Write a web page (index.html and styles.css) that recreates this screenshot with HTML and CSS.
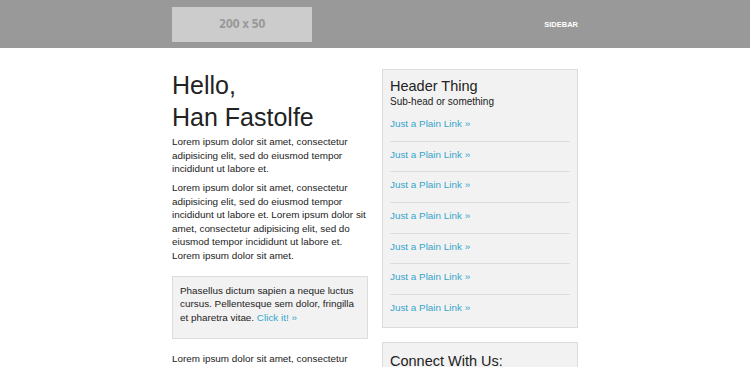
FILE: index.html
```html
<!DOCTYPE html>
<html lang="en">

<head>
    <meta charset="UTF-8">
    <meta name="viewport" content="width=device-width, initial-scale=1.0">
    <title>Hello, Han Fastolfe</title>
    <link rel="stylesheet" href="styles.css">
</head>

<body>

    <!-- Top bar -->
    <header class="topbar">
        <div class="wrap topbar-inner">
            <a class="logo" href="#">200 x 50</a>
            <a class="topbar-link" href="#">SIDEBAR</a>
        </div>
    </header>

    <!-- Main -->
    <div class="wrap main">
        <div class="content">
            <h1>Hello,<br>Han Fastolfe</h1>
            <p>Lorem ipsum dolor sit amet, consectetur adipisicing elit, sed do eiusmod tempor incididunt ut labore et.</p>
            <p>Lorem ipsum dolor sit amet, consectetur adipisicing elit, sed do eiusmod tempor incididunt ut labore et. Lorem ipsum dolor sit amet, consectetur adipisicing elit, sed do eiusmod tempor incididunt ut labore et. Lorem ipsum dolor sit amet.</p>

            <div class="callout">
                <p>Phasellus dictum sapien a neque luctus cursus. Pellentesque sem dolor, fringilla et pharetra vitae. <a href="#">Click it! &raquo;</a></p>
            </div>

            <p>Lorem ipsum dolor sit amet, consectetur adipisicing elit, sed do eiusmod tempor incididunt ut labore et.</p>
        </div>

        <aside class="sidebar">
            <div class="panel">
                <h3>Header Thing</h3>
                <h5>Sub-head or something</h5>
                <ul class="link-list">
                    <li><a href="#">Just a Plain Link &raquo;</a></li>
                    <li><a href="#">Just a Plain Link &raquo;</a></li>
                    <li><a href="#">Just a Plain Link &raquo;</a></li>
                    <li><a href="#">Just a Plain Link &raquo;</a></li>
                    <li><a href="#">Just a Plain Link &raquo;</a></li>
                    <li><a href="#">Just a Plain Link &raquo;</a></li>
                    <li><a href="#">Just a Plain Link &raquo;</a></li>
                </ul>
            </div>

            <div class="panel">
                <h3 class="big">Connect With Us:</h3>
            </div>
        </aside>
    </div>

</body>

</html>
```

FILE: styles.css
```css
body {
    font-family: 'Liberation Sans', Arial, sans-serif;
    font-size: 9.9px;
    line-height: 13.5px;
    color: #222;
    background: #fff;
    margin: 0;
    padding: 0;
}

a {
    color: #35a5cc;
    text-decoration: none;
}

.wrap {
    width: 406px;
    margin: 0 auto;
}

/* Top bar */
.topbar {
    background: #999;
    height: 48px;
}

.topbar-inner {
    display: flex;
    justify-content: space-between;
    align-items: flex-start;
    padding-top: 7px;
}

.logo {
    display: flex;
    align-items: center;
    justify-content: center;
    width: 140px;
    height: 35px;
    background: #ccc;
    color: #999;
    font-family: 'DejaVu Sans Condensed', 'DejaVu Sans', sans-serif;
    font-weight: bold;
    font-size: 11.5px;
    letter-spacing: -0.5px;
}

.topbar-link {
    color: #fff;
    font-weight: bold;
    font-size: 7.5px;
    line-height: 10px;
    margin-top: 13px;
}

/* Main */
.main {
    display: flex;
    justify-content: space-between;
    align-items: flex-start;
    padding-top: 21px;
}

.content {
    width: 196px;
}

h1 {
    font-size: 25px;
    font-weight: normal;
    line-height: 32px;
    margin: 0 0 2px;
    color: #222;
}

p {
    margin: 0 0 5.5px;
}

.callout {
    background: #f2f2f2;
    border: 1px solid #ddd;
    padding: 7px;
    margin: 13.5px 0 13px;
}

.callout p {
    margin-bottom: 6.5px;
}

.sidebar {
    width: 196px;
}

.panel {
    background: #f2f2f2;
    border: 1px solid #ddd;
    padding: 8px 7px 2px;
    margin-bottom: 14px;
}

h3 {
    font-size: 14.5px;
    font-weight: normal;
    line-height: 17px;
    margin: 0;
    color: #222;
}

h3.big {
    line-height: 20px;
}

h5 {
    font-size: 10px;
    font-weight: normal;
    line-height: 13px;
    margin: 0;
    color: #222;
}

.link-list {
    list-style-type: none;
    margin: 3px 0 0;
    padding: 0;
}

.link-list li {
    line-height: 13px;
    padding: 6px 0 10.7px;
}

.link-list li + li {
    border-top: 1px solid #ddd;
}
```
